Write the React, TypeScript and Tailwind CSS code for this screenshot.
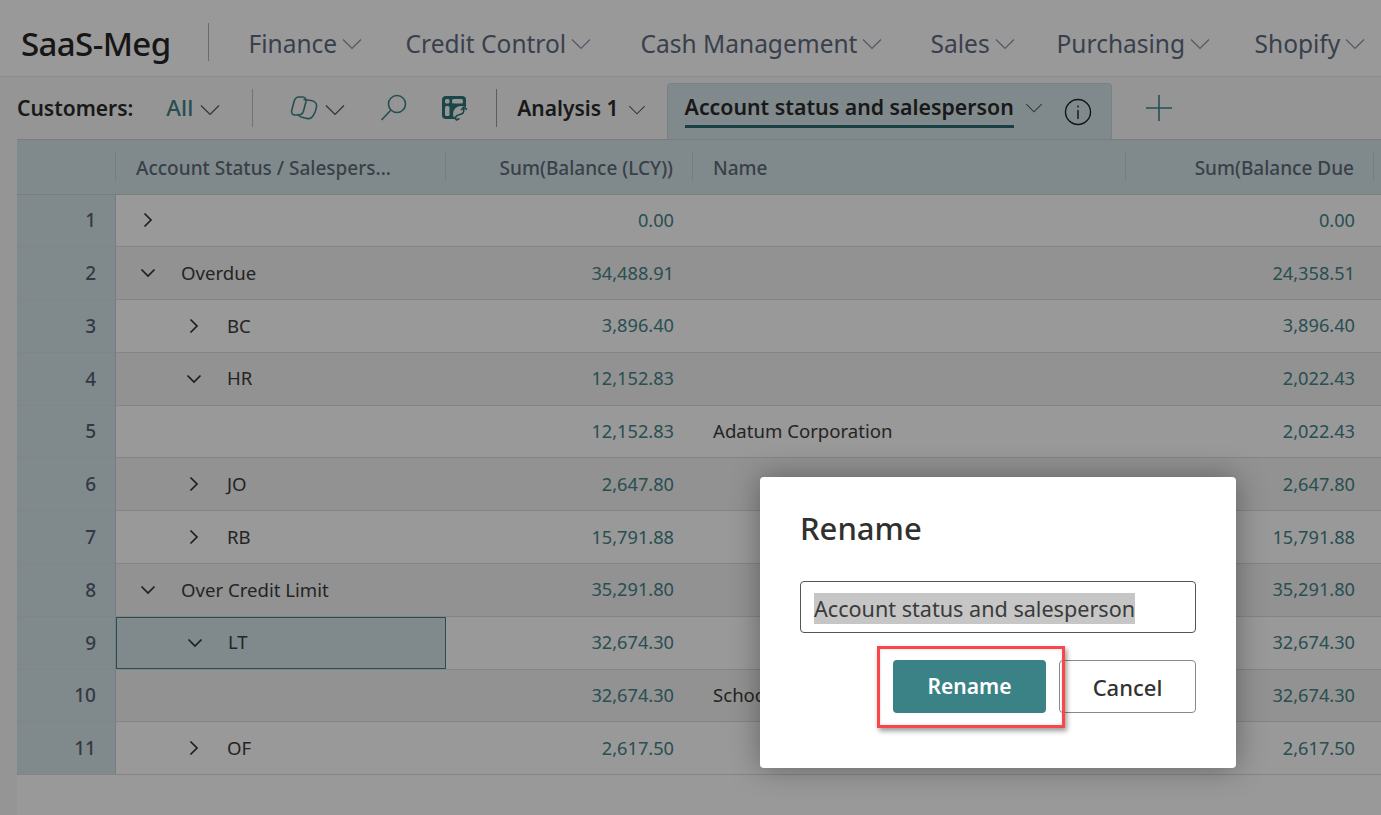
const rows = [
  { n: 1, level: 0, open: false, label: '', lcy: '0.00', name: '', due: '0.00' },
  { n: 2, level: 0, open: true, label: 'Overdue', lcy: '34,488.91', name: '', due: '24,358.51' },
  { n: 3, level: 1, open: false, label: 'BC', lcy: '3,896.40', name: '', due: '3,896.40' },
  { n: 4, level: 1, open: true, label: 'HR', lcy: '12,152.83', name: '', due: '2,022.43' },
  { n: 5, level: -1, open: false, label: '', lcy: '12,152.83', name: 'Adatum Corporation', due: '2,022.43' },
  { n: 6, level: 1, open: false, label: 'JO', lcy: '2,647.80', name: '', due: '2,647.80' },
  { n: 7, level: 1, open: false, label: 'RB', lcy: '15,791.88', name: '', due: '15,791.88' },
  { n: 8, level: 0, open: true, label: 'Over Credit Limit', lcy: '35,291.80', name: '', due: '35,291.80' },
  { n: 9, level: 1, open: true, label: 'LT', lcy: '32,674.30', name: '', due: '32,674.30' },
  { n: 10, level: -1, open: false, label: '', lcy: '32,674.30', name: 'School of Fine Art', due: '32,674.30' },
  { n: 11, level: 1, open: false, label: 'OF', lcy: '2,617.50', name: '', due: '2,617.50' },
];

const navItems = [
  { label: 'Finance', w: 'w-[157px]' },
  { label: 'Credit Control', w: 'w-[235px]' },
  { label: 'Cash Management', w: 'w-[290px]' },
  { label: 'Sales', w: 'w-[126px]' },
  { label: 'Purchasing', w: 'w-[198px]' },
  { label: 'Shopify', w: 'w-[120px]' },
];

function Chevron({ className = '' }: { className?: string }) {
  return (
    <svg className={className} width="20" height="12" viewBox="0 0 20 12" fill="none" stroke="currentColor" strokeWidth="1.2">
      <path d="M1 1.5 10 10.5 19 1.5" />
    </svg>
  );
}

function TreeToggle({ open }: { open: boolean }) {
  return (
    <svg width="16" height="16" viewBox="0 0 16 16" fill="none" stroke="#333333" strokeWidth="1.7">
      {open ? <path d="M1.5 4.5 8 11 14.5 4.5" /> : <path d="M4.5 1.5 11 8 4.5 14.5" />}
    </svg>
  );
}

function Header() {
  return (
    <div className="flex h-[77px] items-center border-b border-[#e8e8e8] bg-white pl-[21px]">
      <span className="mt-[12px] text-[33px] font-medium tracking-[-0.6px] text-[#262626]">SaaS-Meg</span>
      <div className="ml-[37px] mr-[40px] mt-[8px] h-[38px] w-px bg-[#b5b5b5]" />
      {navItems.map(item => (
        <div key={item.label} className={`mt-[12px] flex shrink-0 items-center gap-[5px] text-[24.5px] text-[#5f6b80] ${item.w}`}>
          <span>{item.label}</span>
          <Chevron className="text-[#8a93a3]" />
        </div>
      ))}
    </div>
  );
}

function Toolbar() {
  return (
    <div className="flex h-[62px] items-center bg-[#f8f8f8] pl-[17px]">
      <span className="mt-px text-[21px] font-semibold text-[#2b2b2b]">Customers:</span>
      <span className="ml-[33px] text-[22.5px] font-medium text-[#3f8489]">All</span>
      <Chevron className="ml-[7px] mt-[3px] text-[#555555]" />
      <div className="ml-[32px] h-[38px] w-px bg-[#c2c2c2]" />
      <svg className="ml-[37px]" width="28" height="24" viewBox="0 0 28 24" fill="none" stroke="#3f8489" strokeWidth="1.6">
        <path d="M9 1h3.500c2.500 0 4 2 3.500 4.500L13.500 15c-.7 2.500-2.500 4-5 4H5c-2.500 0-4-2-3.300-4.500L4.200 5C5 2.500 6.500 1 9 1Z" />
        <path d="M13.500 3.500 21 4.500c3.500.5 6 3 5.500 6.500-.5 3.500-1.500 6-3.500 9-1.500 2.300-3.500 3-6 2.500l-6-1.500c-2-.6-3-2-3.500-3" />
      </svg>
      <Chevron className="ml-[7px] mt-[3px] text-[#555555]" />
      <svg className="ml-[35px]" width="28" height="28" viewBox="0 0 28 28" fill="none" stroke="#3f8489" strokeWidth="1.6">
        <circle cx="17" cy="10" r="8.500" />
        <path d="M11 16 1.500 26" />
      </svg>
      <svg className="ml-[34px]" width="26" height="25" viewBox="0 0 26 25">
        <rect x="0" y="0" width="24" height="23" rx="4" fill="#2f7378" />
        <rect x="3" y="3" width="4.500" height="4.500" rx="1.500" fill="#f8f8f8" />
        <rect x="10" y="3" width="11" height="4.500" rx="1.500" fill="#f8f8f8" />
        <rect x="3" y="10" width="4.500" height="10" rx="1.500" fill="#f8f8f8" />
        <circle cx="19" cy="18" r="8" fill="#f8f8f8" />
        <path d="M14 23.500c-1.500-3 1-4.500 4-5 3-.5 4.500-2 3.500-6M19 14l2.500-2.500L25 13.500M12 21l2.500 3 3-1.500" fill="none" stroke="#2f7378" strokeWidth="1.600" />
      </svg>
      <div className="ml-[28px] h-[38px] w-px bg-[#9c9c9c]" />
      <span className="ml-[20px] mt-px text-[21px] font-semibold text-[#2b2b2b]">Analysis 1</span>
      <Chevron className="ml-[8px] mt-[3px] scale-[0.85] text-[#555555]" />
      <div className="ml-[20px] flex h-[56px] w-[445px] self-end rounded-t border border-b-0 border-[#c7dbe1] bg-[#d6e6ea] pl-[17px]">
        <div className="mt-[6px] h-[38px] border-b-[3px] border-[#2c6a6e] text-[21.3px] font-semibold leading-[33px] text-[#2b2b2b]">
          Account status and salesperson
        </div>
        <Chevron className="ml-[10px] mt-[18px] scale-[0.85] text-[#555555]" />
        <svg className="ml-[20px] mt-[14px]" width="28" height="28" viewBox="0 0 28 28" fill="none" stroke="#222222" strokeWidth="1.400">
          <circle cx="14" cy="14" r="12.500" />
          <path d="M14 12v9M14 7.500v2" />
        </svg>
      </div>
      <svg className="ml-[33px]" width="28" height="28" viewBox="0 0 28 28" fill="none" stroke="#3f8489" strokeWidth="1.600">
        <path d="M14 1v26M1 14h26" />
      </svg>
    </div>
  );
}

function HeaderCell({ children, right, w }: { children?: React.ReactNode; right?: boolean; w: string }) {
  return (
    <div className={`flex h-full shrink-0 items-center pt-[2px] text-[19px] font-medium text-[#5f6b78] ${w} ${right ? 'justify-end pr-[19px]' : 'pl-[20px]'}`}>
      {children}
    </div>
  );
}

function Sep() {
  return <div className="h-[27px] w-px shrink-0 bg-[#bfd2d8]" />;
}

function Table() {
  return (
    <div className="flex grow flex-col bg-[#f8f8f8] pl-[17px]">
      <div className="flex h-[55.5px] shrink-0 items-center border-y border-[#cfcfcf] bg-[#d6e6ea]">
        <div className="w-[98px] shrink-0" />
        <Sep />
        <HeaderCell w="w-[329px]">Account Status / Salespers...</HeaderCell>
        <Sep />
        <HeaderCell w="w-[246px]" right>Sum(Balance (LCY))</HeaderCell>
        <Sep />
        <HeaderCell w="w-[432px]">Name</HeaderCell>
        <Sep />
        <HeaderCell w="w-[247px]" right>Sum(Balance Due</HeaderCell>
        <Sep />
      </div>
      {rows.map(row => (
        <div
          key={row.n}
          className={`flex h-[52.8px] shrink-0 items-center border-b border-[#dddddd] text-[18.6px] ${row.n % 2 === 0 ? 'bg-[#f3f3f3]' : 'bg-white'}`}
        >
          <div className="flex h-full w-[99px] shrink-0 items-center justify-end border-r border-[#bfd2d8] bg-[#d6e6ea] pr-[19px] text-[19px] font-medium text-[#566070]">
            {row.n}
          </div>
          <div
            className={`flex h-full w-[330px] shrink-0 items-center ${row.n === 9 ? 'border border-[#3f8489] bg-[#d6e6ea]' : ''} ${row.level === 1 ? 'pl-[70px]' : 'pl-[24px]'}`}
          >
            {row.level >= 0 && <TreeToggle open={row.open} />}
            <span className="mb-px ml-[25px] text-[#3d3d3d]">{row.label}</span>
          </div>
          <div className="w-[247px] shrink-0 pr-[19px] text-right text-[18.2px] text-[#458488]">{row.lcy}</div>
          <div className="mb-px w-[433px] shrink-0 pl-[20px] text-[#3d3d3d]">{row.name}</div>
          <div className="w-[248px] shrink-0 pr-[19px] text-right text-[18.2px] text-[#458488]">{row.due}</div>
        </div>
      ))}
      <div className="grow bg-white" />
    </div>
  );
}

function RenameDialog() {
  return (
    <div className="absolute left-[760px] top-[477px] flex h-[291px] w-[476px] flex-col rounded bg-white px-10 pt-[26px] shadow-[0_0_30px_rgba(0,0,0,0.35)]">
      <h2 className="text-[31px] font-medium leading-[50px] text-[#303030]">Rename</h2>
      <div className="mt-[28px] flex h-[52px] items-center rounded border border-[#555555] pl-[13px] pt-[2px] text-[21.6px] text-[#3b3b3b]">
        <span className="bg-[#c6c6c6] leading-[31px]">Account status and salesperson</span>
      </div>
      <div className="mt-[27px] flex justify-end gap-[13px]">
        <button className="h-[53px] w-[153px] rounded bg-[#3b8287] pt-px text-[21px] font-semibold text-white">Rename</button>
        <button className="h-[53px] w-[137px] rounded border border-[#8a8a8a] bg-white pt-px text-[22px] font-medium text-[#333333]">Cancel</button>
      </div>
      <div className="absolute left-[117px] top-[169px] h-[82px] w-[188px] border-[3px] border-[#fb4549] shadow-[2px_3px_5px_rgba(0,0,0,0.4),inset_0_0_3px_rgba(0,0,0,0.15)]" />
    </div>
  );
}

export default function App() {
  return (
    <div className="relative flex h-screen flex-col overflow-hidden bg-white font-['Noto_Sans',sans-serif]">
      <Header />
      <Toolbar />
      <Table />
      <div className="absolute inset-0 bg-black/40" />
      <RenameDialog />
    </div>
  );
}
